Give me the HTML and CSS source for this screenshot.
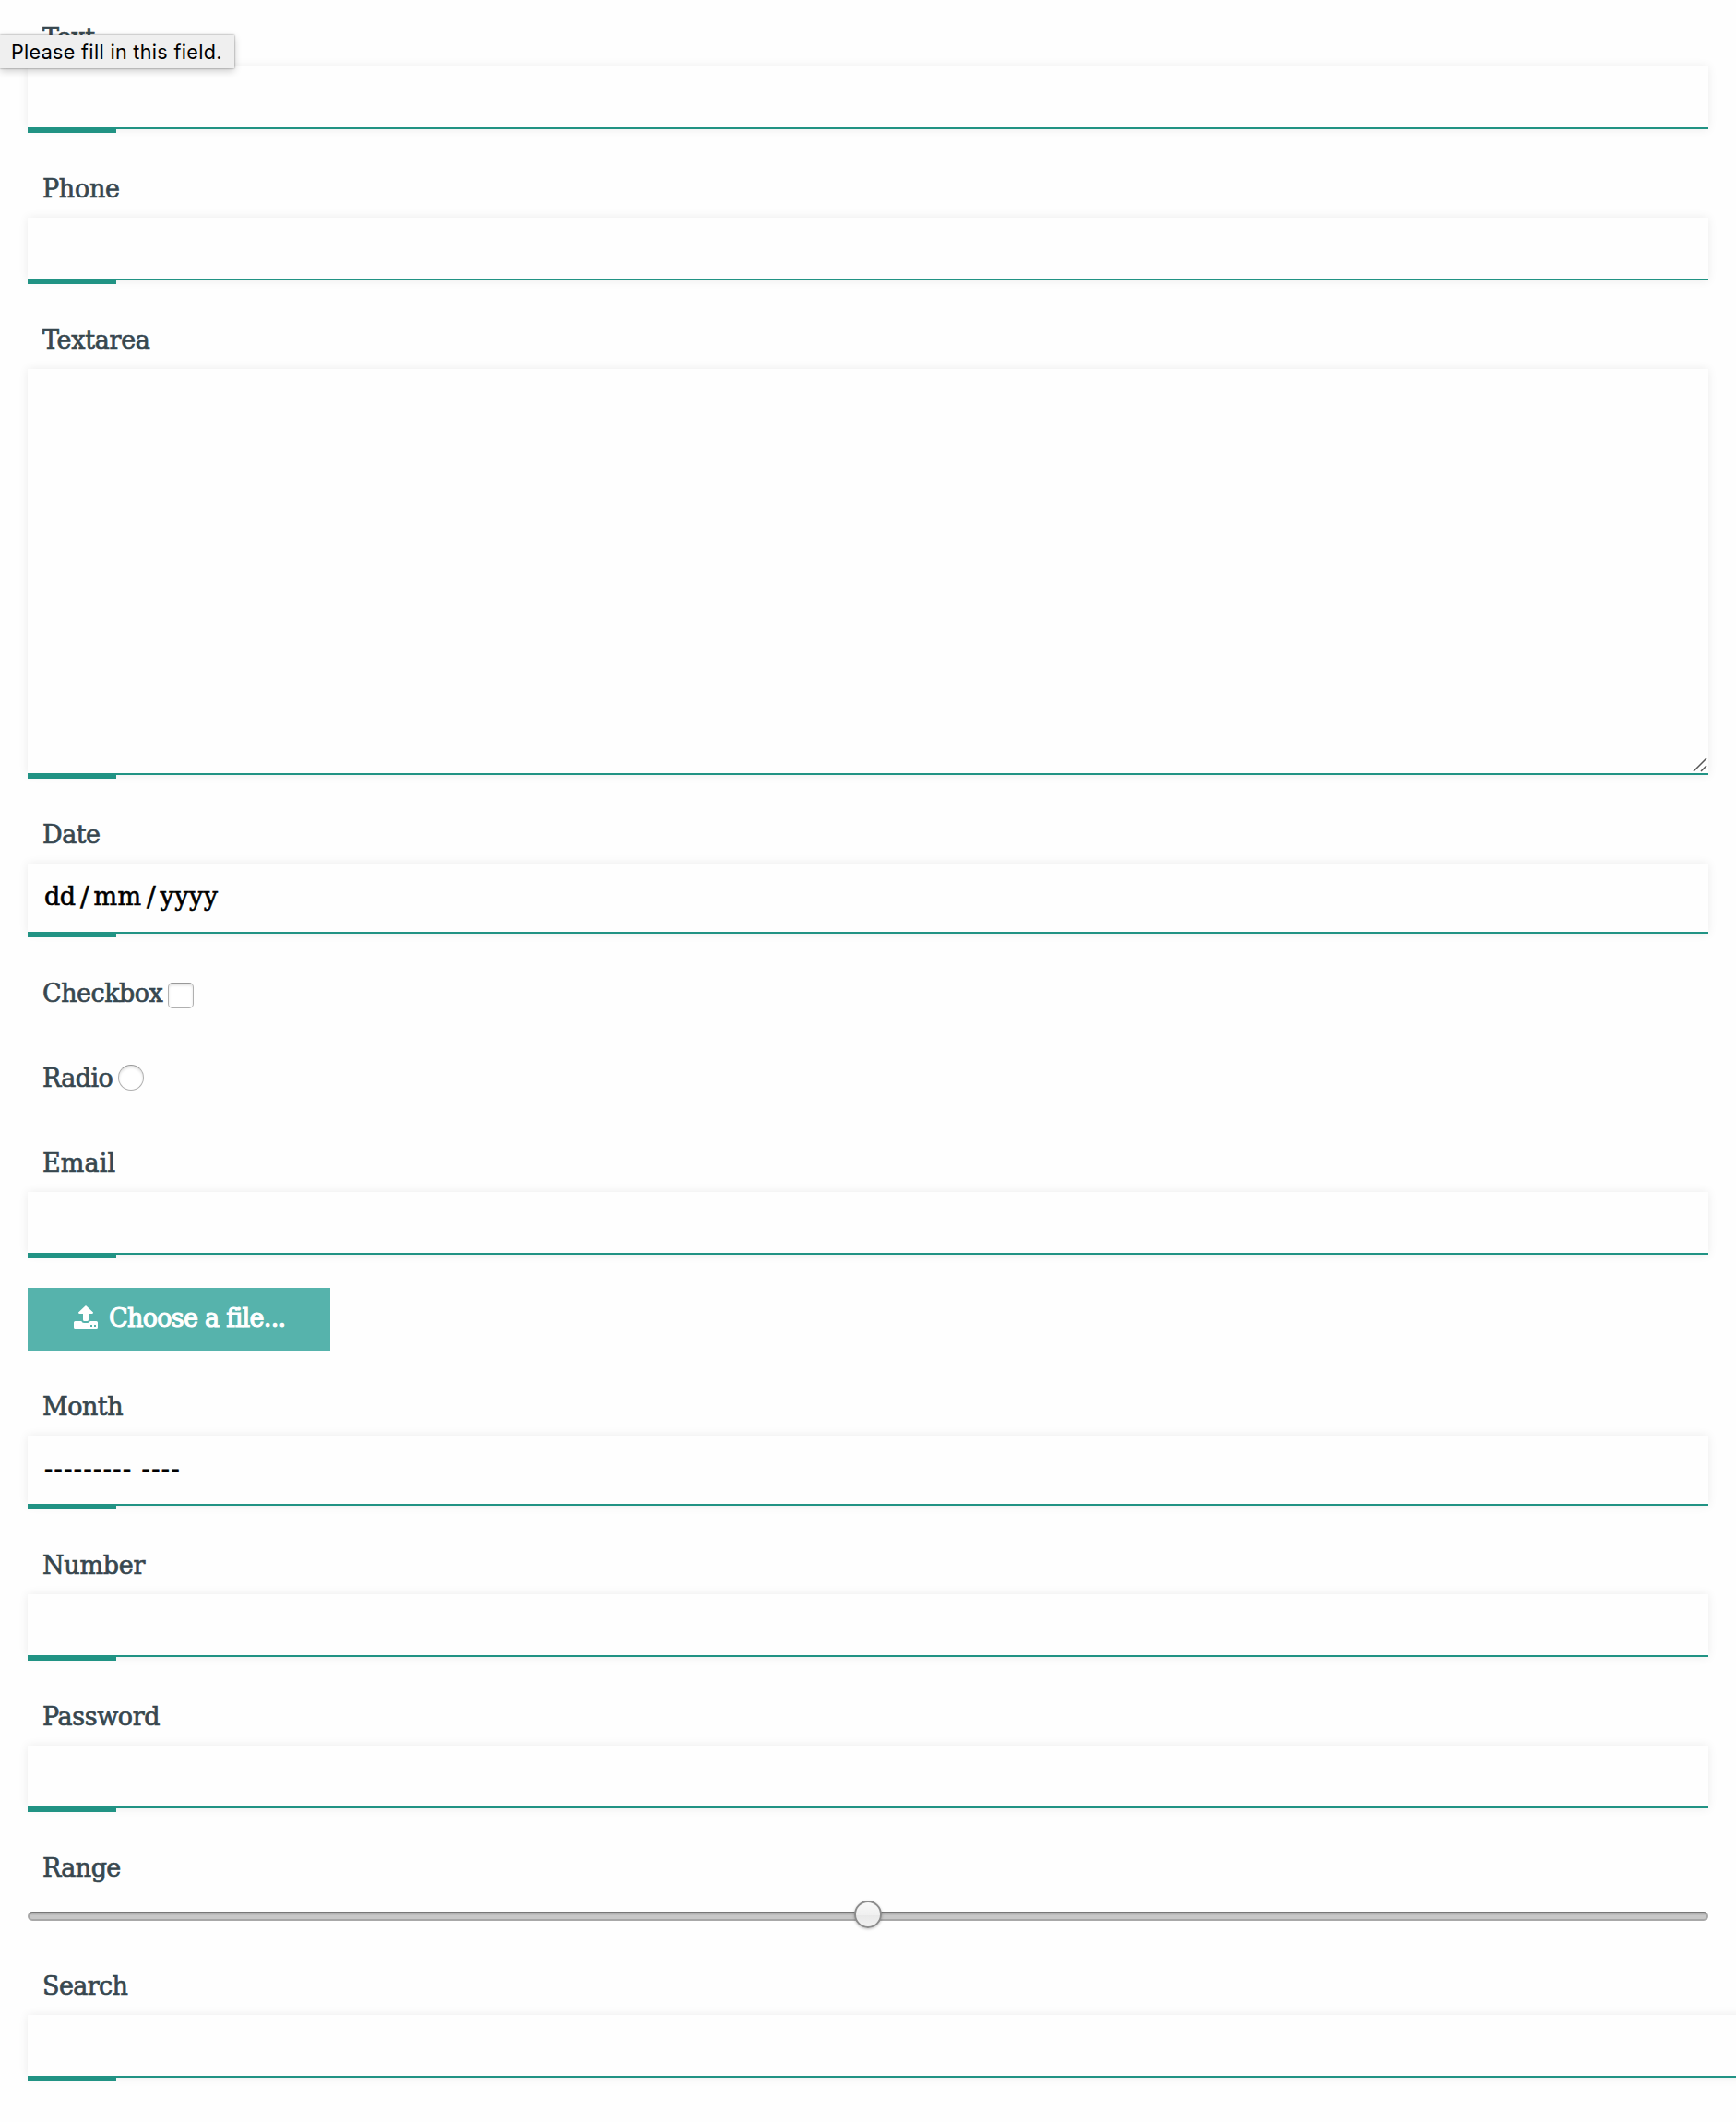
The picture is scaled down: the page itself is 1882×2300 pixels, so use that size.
FILE: index.html
```html
<!DOCTYPE html>
<html lang="en">
<head>
<meta charset="utf-8">
<title>Form</title>
<link rel="stylesheet" href="styles.css">
</head>
<body>
<div class="tooltip" role="tooltip"><span>Please fill in this field.</span></div>
<form class="form">
  <div class="group first"><label class="label t-text">Text</label><div class="field"></div></div>
  <div class="group"><label class="label t-phone">Phone</label><div class="field"></div></div>
  <div class="group"><label class="label t-textarea">Textarea</label>
    <div class="field area"><svg class="grip" width="16" height="16" viewBox="0 0 16 16"><path d="M1 15L15 1M9 15L15 9"/></svg></div>
  </div>
  <div class="group"><label class="label t-date">Date</label>
    <div class="field tall"><span class="value"><span>dd</span><span class="slash">/</span><span class="mm">mm</span><span class="slash">/</span><span class="yy">yyyy</span></span></div>
  </div>
  <div class="group option"><label class="label t-checkbox">Checkbox</label><span class="box"></span></div>
  <div class="group option"><label class="label t-radio">Radio</label><span class="box radio"></span></div>
  <div class="group email"><label class="label t-email">Email</label><div class="field"></div></div>
  <div class="file">
    <svg class="upload" width="26" height="25" viewBox="0 0 26 25"><path d="M13 0L21 7.6Q21 9 20 9H16V15.5Q16 17 14.500 17H11.500Q10 17 10 15.500V9H6Q5 9 5 7.600Z"/><path fill-rule="evenodd" d="M1.500 17H8.300Q9 19 11 19H15Q17 19 17.700 17H24.500Q26 17 26 18.500V23.500Q26 25 24.500 25H1.500Q0 25 0 23.500V18.500Q0 17 1.500 17ZM18 21V23H20V21ZM22 21V23H24V21Z"/></svg>
    <span class="file-text">Choose a file...</span>
  </div>
  <div class="group month"><label class="label t-month">Month</label>
    <div class="field tall"><span class="value dashes"><span>---------</span><span>----</span></span></div>
  </div>
  <div class="group"><label class="label t-number">Number</label><div class="field"></div></div>
  <div class="group"><label class="label t-password">Password</label><div class="field"></div></div>
  <div class="group"><label class="label t-range">Range</label><div class="range"><div class="track"><span class="thumb"></span></div></div></div>
  <div class="group search"><label class="label t-search">Search</label><div class="field wide"></div></div>
</form>
</body>
</html>
```
FILE: styles.css
```css
* { box-sizing: border-box; }
html { background: #fefefe; }
body {
  margin: 0;
  height: 2300px;
  overflow: hidden;
  position: relative;
  font-family: "DejaVu Serif", serif;
  font-size: 27px;
  letter-spacing: -0.5px;
  color: #37474f;
}
.form { padding: 0 30px; display: flex; flex-direction: column; }
.group { padding-top: 44px; }
.first { padding-top: 20px; }
.label { display: block; height: 52px; line-height: 42px; padding-left: 16px; -webkit-text-stroke: 0.7px currentColor; }
.t-text, .t-phone, .t-textarea, .t-number { letter-spacing: -0.3px; }
.t-email { letter-spacing: 0.1px; }
.t-password { letter-spacing: -0.4px; }
.t-radio, .t-range, .t-search { letter-spacing: -0.6px; }
.field {
  position: relative;
  height: 68px;
  background: #fefefe;
  border-bottom: 2px solid #219384;
  box-shadow: 0 0 10px rgba(0, 0, 0, 0.08);
}
.field::after {
  content: "";
  position: absolute;
  left: 0;
  top: 66px;
  width: 96px;
  height: 6px;
  background: #219384;
}
.tall { height: 76px; }
.tall::after { top: 74px; }
.area { height: 440px; }
.area::after { top: 438px; }
.wide { width: 1872px; }
.grip { position: absolute; right: 1px; bottom: 1px; fill: none; stroke: #555; stroke-width: 1.5; }
.value { display: flex; padding: 16px 0 0 18px; line-height: 40px; color: #000; -webkit-text-stroke: 0.6px #000; }
.slash { width: 20px; text-align: center; font-size: 29px; }
.mm { letter-spacing: 0.4px; }
.yy { letter-spacing: 0.5px; }
.dashes { gap: 10px; letter-spacing: 1.5px; }
.option { display: flex; height: 92px; align-items: flex-start; }
.box {
  width: 28px;
  height: 28px;
  margin: 9px 0 0 6px;
  border: 1px solid #b0b0b0;
  border-top-color: #999;
  border-radius: 5px;
  background: #fff;
  box-shadow: inset 0 2px 3px rgba(0, 0, 0, 0.12);
}
.radio { border-radius: 50%; margin-top: 6px; }
.file {
  display: flex;
  align-items: center;
  width: 328px;
  height: 68px;
  margin-top: 36px;
  padding-left: 50px;
  background: #56b3ac;
  color: #fff;
}
.upload { fill: #fff; margin-top: -6px; }
.file-text { margin-left: 12px; margin-top: -3px; line-height: 40px; letter-spacing: -0.7px; white-space: nowrap; -webkit-text-stroke: 1.1px #fff; }
.month { padding-top: 40px; }
.range { height: 36px; padding: 12px 0; margin-top: -4px; }
.track {
  position: relative;
  height: 10px;
  margin-top: 8px;
  border-radius: 5px;
  border: 2px solid #a8a8a8;
  border-top-color: #777;
  background: linear-gradient(#aaa, #c8c8c8 40%, #c8c8c8);
}
.thumb {
  position: absolute;
  left: 894px;
  top: -14px;
  width: 30px;
  height: 30px;
  border: 2px solid #8c8c8c;
  border-radius: 50%;
  background: linear-gradient(#f8f8f8, #f0f0f0 52%, #e8e8e8 53%, #f2f2f2);
  box-shadow: 0 1px 3px rgba(0, 0, 0, 0.25);
}
.tooltip {
  position: absolute;
  z-index: 5;
  left: 0;
  top: 38px;
  width: 254px;
  height: 36px;
  padding-left: 12px;
  line-height: 36px;
  font-family: Inter, sans-serif;
  font-size: 21.5px;
  letter-spacing: 0.34px;
  color: #000;
  white-space: nowrap;
  background: #efefef;
  box-shadow: 0 0 2px rgba(0, 0, 0, 0.45), 0 3px 8px rgba(0, 0, 0, 0.2);
}
```
